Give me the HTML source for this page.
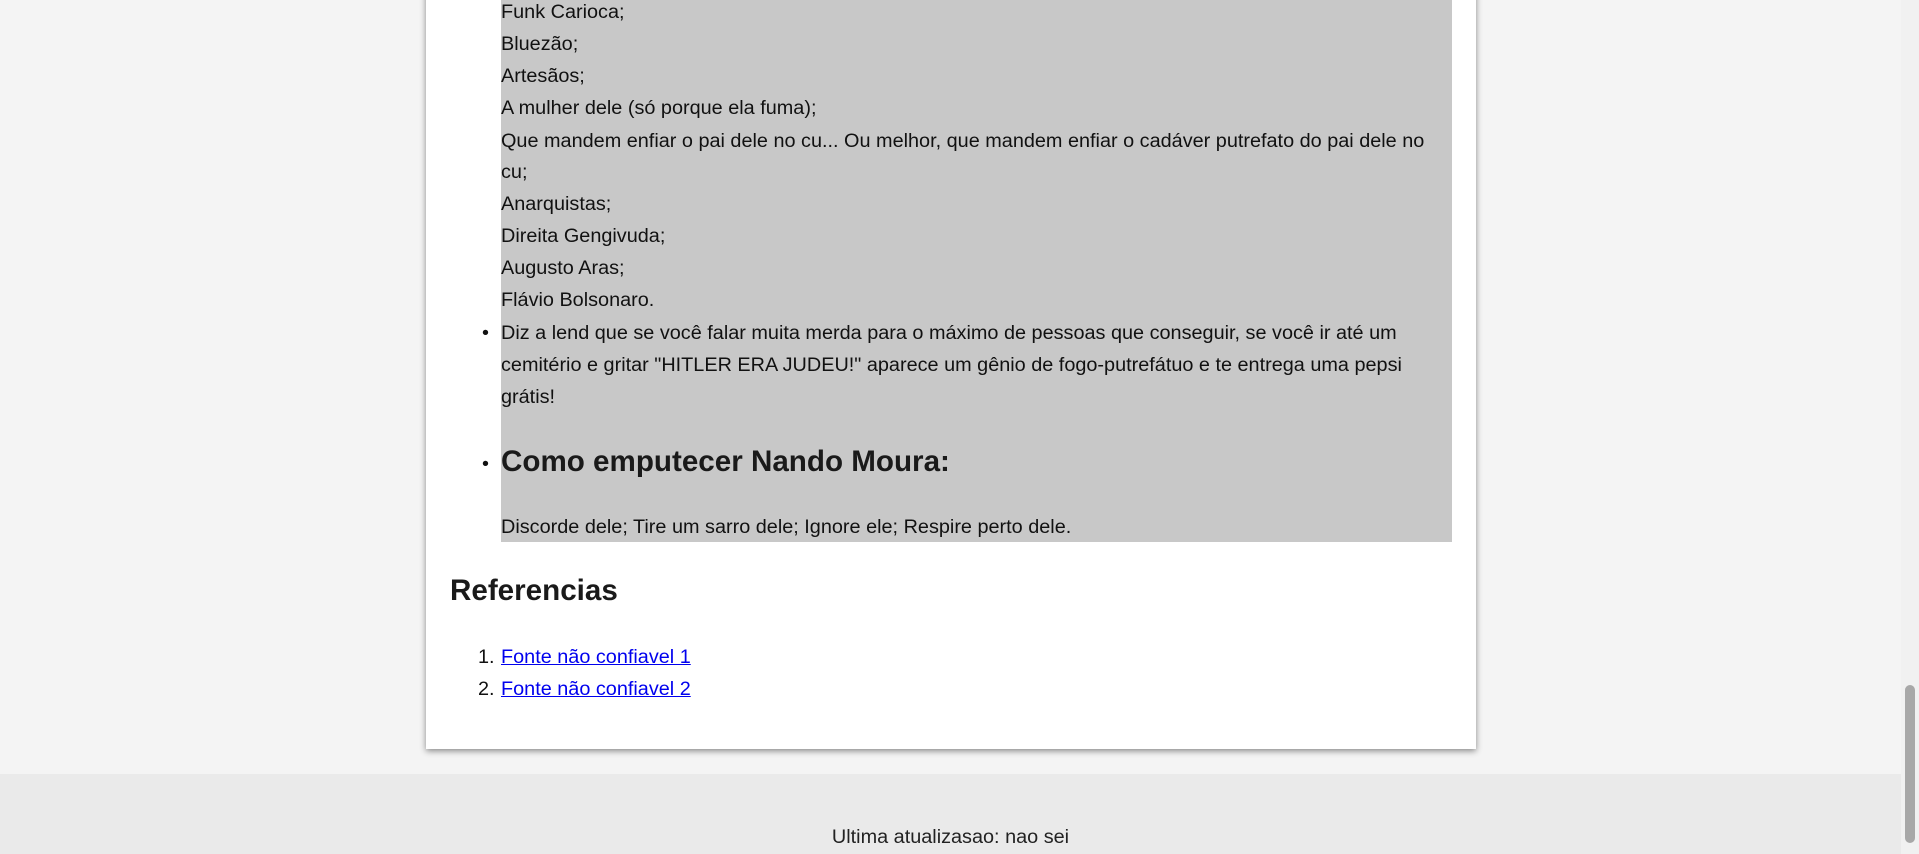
<!DOCTYPE html>
<html><head><meta charset="utf-8"><style>
html,body{margin:0;padding:0;width:1919px;height:854px;overflow:hidden;background:#f4f4f4;font-family:"Liberation Sans",Arial,sans-serif;color:#111;}
.card{position:absolute;left:426px;top:-10px;width:1050px;height:759px;background:#fff;box-shadow:0 2px 6px rgba(0,0,0,.45);}
.gray{position:absolute;left:501px;top:0;width:951px;height:542px;background:#c8c8c8;}
.t{position:absolute;left:501px;font-size:19.85px;line-height:32px;white-space:nowrap;}
.b{position:absolute;font-size:19.85px;line-height:32px;}
.h{position:absolute;font-weight:bold;font-size:29.6px;line-height:36px;white-space:nowrap;color:#1a1a1a;}
a{color:#0000ee;text-decoration:underline;}
.footer{position:absolute;left:0;top:774px;width:1901px;height:80px;background:#eaeaea;}
.ft{position:absolute;left:0;width:1901px;text-align:center;top:821px;font-size:19.85px;line-height:32px;color:#222;}
.sb{position:absolute;left:1901px;top:0;width:18px;height:854px;background:#f1f1f1;}
.th{position:absolute;left:1905px;top:685px;width:10px;height:158px;background:#a8a8a8;border-radius:5px;}
</style></head><body>
<div class="card"></div>
<div class="gray"></div>
<div class="t" style="top:-4px">Funk Carioca;</div>
<div class="t" style="top:28px">Bluezão;</div>
<div class="t" style="top:60px">Artesãos;</div>
<div class="t" style="top:92px">A mulher dele (só porque ela fuma);</div>
<div class="t" style="top:125px">Que mandem enfiar o pai dele no cu... Ou melhor, que mandem enfiar o cadáver putrefato do pai dele no</div>
<div class="t" style="top:156px">cu;</div>
<div class="t" style="top:188px">Anarquistas;</div>
<div class="t" style="top:220px">Direita Gengivuda;</div>
<div class="t" style="top:252px">Augusto Aras;</div>
<div class="t" style="top:284px">Flávio Bolsonaro.</div>
<div class="b" style="left:482px;top:317px">•</div>
<div class="t" style="top:317px">Diz a lend que se você falar muita merda para o máximo de pessoas que conseguir, se você ir até um</div>
<div class="t" style="top:349px">cemitério e gritar "HITLER ERA JUDEU!" aparece um gênio de fogo-putrefátuo e te entrega uma pepsi</div>
<div class="t" style="top:381px">grátis!</div>
<div class="b" style="left:482px;top:448px">•</div>
<div class="h" style="left:501px;top:444px">Como emputecer Nando Moura:</div>
<div class="t" style="top:511px">Discorde dele; Tire um sarro dele; Ignore ele; Respire perto dele.</div>
<div class="h" style="left:450px;top:573px">Referencias</div>
<div class="b" style="left:478px;top:641px">1.</div>
<div class="t" style="top:641px"><a>Fonte não confiavel 1</a></div>
<div class="b" style="left:478px;top:673px">2.</div>
<div class="t" style="top:673px"><a>Fonte não confiavel 2</a></div>
<div class="footer"></div>
<div class="ft">Ultima atualizasao: nao sei</div>
<div class="sb"></div><div class="th"></div>
</body></html>
